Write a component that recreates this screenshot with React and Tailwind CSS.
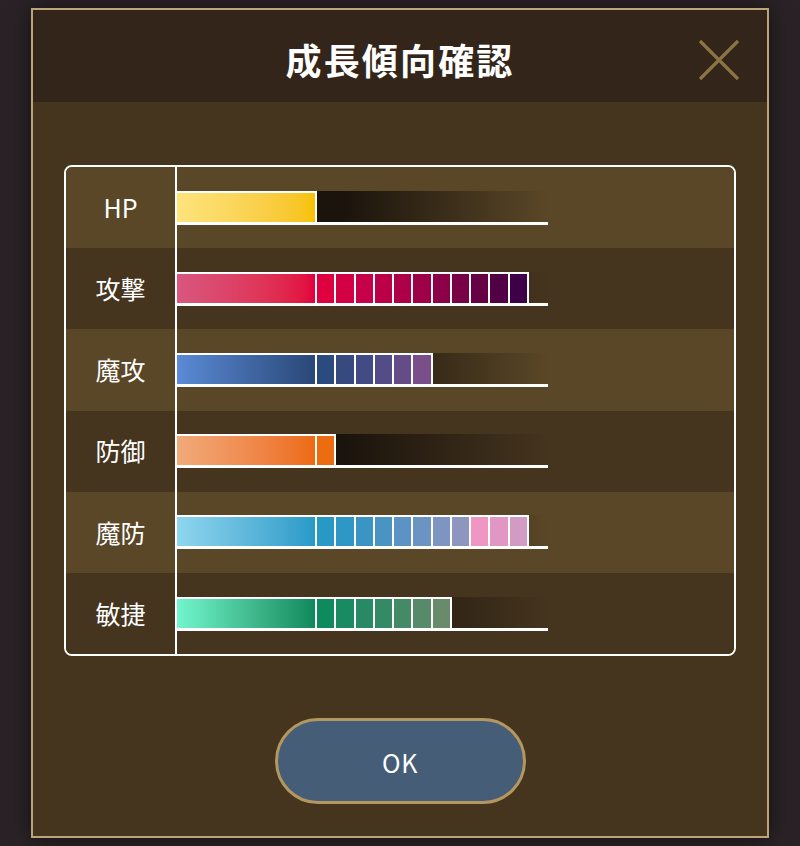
import React from "react";

const stats = [
  {
    label: "HP",
    base: "bg-linear-to-r from-[#fde47c] to-[#f7c200]",
    cells: [],
  },
  {
    label: "攻撃",
    base: "bg-linear-to-r from-[#d8567f] to-[#e2003c]",
    cells: ["#de003f", "#d30045", "#c7004a", "#bb0049", "#ad0049", "#9d0047", "#8b0047", "#780046", "#650045", "#520046", "#3d0046"],
  },
  {
    label: "魔攻",
    base: "bg-linear-to-r from-[#5a8bd6] to-[#2a4878]",
    cells: ["#2b4a7e", "#364a80", "#424b84", "#534c86", "#644d87", "#7a4e88"],
  },
  {
    label: "防御",
    base: "bg-linear-to-r from-[#f0aa7a] to-[#ed6a0e]",
    cells: ["#ec6d10"],
  },
  {
    label: "魔防",
    base: "bg-linear-to-r from-[#8ed6ee] to-[#269ac8]",
    cells: ["#2898c4", "#2f97c6", "#3a95c4", "#4a94c4", "#5b94c4", "#6c94c3", "#7e95c2", "#8e96c0", "#f096c2", "#e196c4", "#d09cc4"],
  },
  {
    label: "敏捷",
    base: "bg-linear-to-r from-[#72f6cd] to-[#0c895c]",
    cells: ["#0f8a5f", "#1a8a62", "#278a64", "#358a66", "#458a67", "#568a69", "#6a8b6b"],
  },
];

function Bar({ base, cells }) {
  return (
    <div className="flex h-[34px] w-[371px] flex-col">
      <div className="flex h-[31px] bg-linear-to-r from-[#1b140c] from-45% to-transparent">
        <div className="flex h-full border-t-2 border-r-2 border-white">
          <div className={`h-full w-[138px] ${base}`} />
          {cells.map((c, i) => (
            <div
              key={i}
              className="h-full w-[19.25px] border-l-2 border-white"
              style={{ backgroundColor: c }}
            />
          ))}
        </div>
      </div>
      <div className="h-[3px] w-full bg-white" />
    </div>
  );
}

export default function App() {
  return (
    <div
      className="flex min-h-[846px] w-full justify-center bg-[#2a2226] pt-[8px]"
      style={{ fontFamily: '"Noto Sans CJK JP", "Noto Sans", sans-serif' }}
    >
      <div className="flex h-[830px] w-[738px] flex-col border-2 border-[#bba47a] bg-[#45341e] shadow-[0_0_20px_rgba(0,0,0,0.5)]">
        <div className="relative flex h-[92px] items-center justify-center bg-[#33251a] pt-[6px]">
          <h1 className="text-[36px] font-bold tracking-[0.06em] text-white">成長傾向確認</h1>
          <button className="absolute right-[27px] top-[29px] h-[42px] w-[42px]">
            <svg viewBox="0 0 42 42" className="h-full w-full">
              <path d="M2 2 L40 40 M40 2 L2 40" stroke="#8c7444" strokeWidth="3.2" fill="none" />
            </svg>
          </button>
        </div>
        <div className="flex flex-1 flex-col items-center pt-[63px]">
          <div className="w-[672px] overflow-hidden rounded-[8px] border-2 border-white">
            {stats.map((s, i) => (
              <div
                key={s.label}
                className={`flex h-[81.2px] ${i % 2 === 0 ? "bg-[#5a4727]" : "bg-[#45341e]"}`}
              >
                <div className="flex w-[111px] items-center justify-center border-r-2 border-white text-[25px] text-white">
                  {s.label}
                </div>
                <div className="flex items-center">
                  <Bar base={s.base} cells={s.cells} />
                </div>
              </div>
            ))}
          </div>
          <button className="mt-[62px] flex h-[86px] w-[251px] items-center justify-center rounded-full border-[3px] border-[#b4975f] bg-[#465d78] pt-[4px] text-[25px] tracking-wide text-white">
            OK
          </button>
        </div>
      </div>
    </div>
  );
}
